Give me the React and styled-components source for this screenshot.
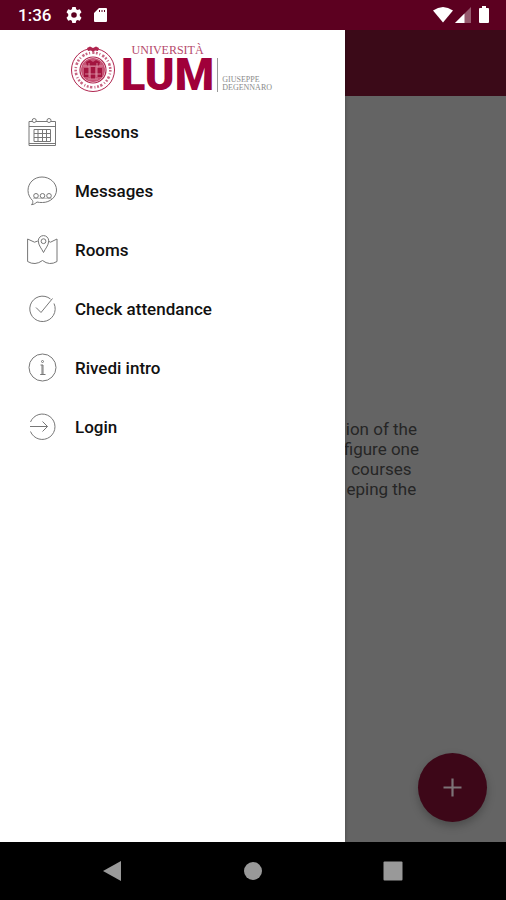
import React from 'react';
import styled, { createGlobalStyle } from 'styled-components';

const GlobalStyle = createGlobalStyle`
  * {
    box-sizing: border-box;
  }

  body {
    margin: 0;
    background: #000;
    font-family: Roboto, 'Liberation Sans', sans-serif;
  }
`;

const LessonsIcon = () => (
  <LineIcon viewBox="0 0 30 30" aria-hidden="true">
    <path d="M5.500 4.500H2V28.500H28.500V4.500H24M9 4.500H20M2 9.500H28.500M2 26.500H28.500" />
    <circle cx="7.200" cy="3.500" r="2" />
    <circle cx="22" cy="3.500" r="2" />
    <path d="M7 12.500H23.500V24.500H7ZM7 16.500H23.500M7 20.500H23.500M11 12.500V24.500M15.500 12.500V24.500M19.500 12.500V24.500" />
  </LineIcon>
);

const MessagesIcon = () => (
  <LineIcon viewBox="0 0 30 30" aria-hidden="true">
    <path d="M5.500 24.500C3 22 1 18.700 1 14.500C1 7 7 1 15 1S29.500 7 29.500 14S23 26.500 15.500 26.500C13.500 26.500 11.500 26.500 10 26C8.500 27.500 6.500 28.500 4.500 28.700C5.700 27.500 6.200 26 5.500 24.500Z" />
    <path d="M6 22.300H25" opacity="0.500" />
    <circle cx="9" cy="19.800" r="2.300" />
    <circle cx="15.500" cy="19.800" r="2.300" />
    <circle cx="22" cy="19.800" r="2.300" />
  </LineIcon>
);

const RoomsIcon = () => (
  <LineIcon viewBox="0 0 30 30" aria-hidden="true">
    <path d="M10.800 6L7.500 7.200L0.600 4V26.500Q8 31 15.500 25.500Q22.500 31 30 26.500V4L23.500 7.200L22 6.500" />
    <path d="M16.500 17.500C15 14 11.300 10.500 11.300 5.800A5.200 5.200 0 0 1 21.700 5.800C21.700 10.500 18 14 16.500 17.500Z" />
    <circle cx="16.500" cy="6.200" r="2.400" />
  </LineIcon>
);

const AttendanceIcon = () => (
  <LineIcon viewBox="0 0 30 30" aria-hidden="true">
    <path d="M27 9.500A12.700 12.700 0 1 1 23.500 5" />
    <path d="M9 13.500L14 18.500L25.500 4.500" />
  </LineIcon>
);

const InfoIcon = () => (
  <LineIcon viewBox="0 0 30 30" aria-hidden="true">
    <circle cx="15.500" cy="14.500" r="13.500" />
    <circle cx="15.500" cy="8.500" r="1" />
    <path d="M13.500 12H16V21M13.200 21.500H18.500M15 12V21" />
  </LineIcon>
);

const LoginIcon = () => (
  <LineIcon viewBox="0 0 30 30" aria-hidden="true">
    <path d="M3.500 10A12.700 12.700 0 1 1 3.500 19.500" />
    <path d="M3 14.500H20.500M15.500 9.500L20.500 14.500L15.500 19.500" />
  </LineIcon>
);

const menuItems = [
  { label: 'Lessons', icon: LessonsIcon },
  { label: 'Messages', icon: MessagesIcon },
  { label: 'Rooms', icon: RoomsIcon },
  { label: 'Check attendance', icon: AttendanceIcon },
  { label: 'Rivedi intro', icon: InfoIcon },
  { label: 'Login', icon: LoginIcon },
];

const introLines = ['ion of the', 'figure one', 'courses', 'eping the'];

const Seal = () => (
  <SealSvg viewBox="0 0 46 50" aria-hidden="true">
    <g fill="none" stroke="#b0254f">
      <circle cx="23" cy="26" r="21.500" strokeWidth="1" />
      <circle cx="23" cy="26" r="17.300" strokeWidth="2.600" strokeDasharray="1.800 1.700 1 2.200 2.400 1.400" opacity="0.700" />
      <circle cx="23" cy="26" r="13" strokeWidth="1.200" />
    </g>
    <circle cx="23" cy="26" r="12" fill="#c75476" />
    <path d="M16 18L20 16L23 18L26 16L30 18L29 22H17ZM14 24H19V33H14ZM21 23H25V35H21ZM27 24H32V33H27Z" fill="#a3143f" />
    <path d="M13 22H33M15 30H31M18 35H28M19 19V33M27 19V33" stroke="#dc97aa" strokeWidth="0.800" />
    <path d="M17 4L20 2.500L23 4L26 2.500L29 4L28 7L25 6.500L23 8L21 6.500L18 7Z" fill="#b0254f" />
  </SealSvg>
);

const App = () => {
  return (
    <Screen>
      <GlobalStyle />
      <StatusBar>
        <Time>1:36</Time>
        <StatusIcon $width={16} viewBox="0 0 16 16" aria-hidden="true">
          <path
            fillRule="evenodd"
            d="M6.300 0H9.700L10.200 2.300L11.500 3L13.800 2.300L15.500 5.200L13.800 6.900V9.100L15.500 10.800L13.800 13.700L11.500 13L10.200 13.700L9.700 16H6.300L5.800 13.700L4.500 13L2.200 13.700L0.500 10.800L2.200 9.100V6.900L0.500 5.200L2.200 2.300L4.500 3L5.800 2.300ZM8 5.200A2.800 2.800 0 1 0 8 10.800A2.800 2.800 0 1 0 8 5.200Z"
          />
        </StatusIcon>
        <StatusIcon $width={13} viewBox="0 0 13 16" aria-hidden="true">
          <path fillRule="evenodd" d="M5 1H12Q13 1 13 2V14Q13 15 12 15H1Q0 15 0 14V6ZM5 3V5H6V3ZM7.500 3V5H8.500V3ZM10 3V5H11V3Z" />
        </StatusIcon>
        <StatusRight>
          <StatusIcon $width={20} viewBox="0 0 20 16" aria-hidden="true">
            <path d="M0 3.500Q10 -3.500 20 3.500L10 15.500Z" />
          </StatusIcon>
          <StatusIcon $width={16} viewBox="0 0 16 16" aria-hidden="true">
            <path d="M16 0V16H0Z" opacity="0.350" />
            <path d="M9.500 6.500V16H0Z" />
          </StatusIcon>
          <StatusIcon $width={12} viewBox="0 0 12 18" aria-hidden="true">
            <path d="M4 0H8V2H10Q11 2 11 3V16Q11 17 10 17H2Q1 17 1 16V3Q1 2 2 2H4Z" />
          </StatusIcon>
        </StatusRight>
      </StatusBar>

      <Body>
        <Main>
          <AppBar />
          <Content>
            <Intro>
              {introLines.map((line) => (
                <span key={line}>{line}</span>
              ))}
            </Intro>
          </Content>
          <AddButton type="button" aria-label="Add">
            <svg width="19" height="19" viewBox="0 0 19 19" aria-hidden="true">
              <path d="M9.500 0.500V18.500M0.500 9.500H18.500" stroke="#7d7377" strokeWidth="2.200" />
            </svg>
          </AddButton>
        </Main>

        <Drawer>
          <Logo>
            <Seal />
            <Brand>
              <University>UNIVERSITÀ</University>
              <Acronym>LUM</Acronym>
            </Brand>
            <Founder>
              <span>GIUSEPPE</span>
              <span>DEGENNARO</span>
            </Founder>
          </Logo>
          <nav>
            <Menu>
              {menuItems.map(({ label, icon: Icon }) => (
                <li key={label}>
                  <MenuLink href="#">
                    <Icon />
                    {label}
                  </MenuLink>
                </li>
              ))}
            </Menu>
          </nav>
        </Drawer>
      </Body>

      <NavBar>
        <NavButton type="button" aria-label="Back">
          <svg width="20" height="20" viewBox="0 0 20 20"><path d="M18 0V20L0 10Z" /></svg>
        </NavButton>
        <NavButton type="button" aria-label="Home">
          <svg width="20" height="20" viewBox="0 0 20 20"><circle cx="10" cy="10" r="9" /></svg>
        </NavButton>
        <NavButton type="button" aria-label="Overview">
          <svg width="20" height="20" viewBox="0 0 20 20"><rect x="0.500" y="0.500" width="19" height="19" rx="1" /></svg>
        </NavButton>
      </NavBar>
    </Screen>
  );
};

const Screen = styled.div`
  display: flex;
  flex-direction: column;
  min-height: 100vh;
`;

const StatusBar = styled.header`
  display: flex;
  align-items: center;
  height: 30px;
  padding: 0 16px 0 18px;
  background: #5c0020;
  color: #fff;
`;

const Time = styled.span`
  margin-right: 15px;
  font-size: 17px;
  font-weight: 500;
  line-height: 20px;
`;

const StatusIcon = styled.svg`
  flex: none;
  width: ${({ $width }) => $width}px;
  height: 16px;
  margin-right: 12px;
  fill: #fff;
`;

const StatusRight = styled.div`
  display: flex;
  align-items: center;
  gap: 2px;
  margin-left: auto;

  ${StatusIcon} {
    margin-right: 0;
  }

  ${StatusIcon}:last-child {
    height: 18px;
    margin-left: 5px;
  }
`;

const Body = styled.div`
  position: relative;
  display: flex;
  flex: 1;
`;

const Main = styled.main`
  position: relative;
  display: flex;
  flex: 1;
  flex-direction: column;
  background: #646464;
`;

const AppBar = styled.div`
  height: 66px;
  background: #3b0a18;
`;

const Content = styled.div`
  display: flex;
  flex: 1;
  align-items: center;
  justify-content: flex-end;
  padding: 0 87px 20px 0;
`;

const Intro = styled.p`
  display: flex;
  flex-direction: column;
  align-items: center;
  margin: 0;
  color: #262626;
  font-size: 17px;
  line-height: 20px;
`;

const AddButton = styled.button`
  position: absolute;
  right: 19px;
  bottom: 20px;
  display: flex;
  align-items: center;
  justify-content: center;
  width: 69px;
  height: 69px;
  padding: 0;
  border: none;
  border-radius: 50%;
  background: #3d0718;
  box-shadow: 0 4px 8px rgba(0, 0, 0, 0.25);
  cursor: pointer;
`;

const Drawer = styled.aside`
  position: absolute;
  top: 0;
  bottom: 0;
  left: 0;
  width: 345px;
  background: #fff;
  box-shadow: 0 0 4px rgba(0, 0, 0, 0.3);
  clip-path: inset(0 -8px 0 0);
`;

const Logo = styled.div`
  display: flex;
  align-items: flex-end;
  height: 72px;
  padding: 0 0 8px 70px;
`;

const SealSvg = styled.svg`
  width: 46px;
  height: 50px;
  margin-right: 5px;
`;

const Brand = styled.div`
  display: flex;
  flex-direction: column;
  align-items: center;
  padding-right: 3px;
`;

const University = styled.span`
  color: #b5486a;
  font-family: 'Liberation Serif', serif;
  font-size: 12px;
  line-height: 12px;
`;

const Acronym = styled.strong`
  color: #a0003a;
  font-size: 45px;
  font-weight: 900;
  line-height: 38px;
`;

const Founder = styled.div`
  display: flex;
  flex-direction: column;
  justify-content: flex-end;
  height: 34px;
  margin-bottom: 2px;
  padding-left: 4px;
  border-left: 1px solid #999;
  color: #8a8a8a;
  font-family: 'Liberation Serif', serif;
  font-size: 8px;
  line-height: 8px;
`;

const Menu = styled.ul`
  margin: 0;
  padding: 0;
  list-style: none;
`;

const MenuLink = styled.a`
  display: flex;
  align-items: center;
  gap: 18px;
  height: 59px;
  padding: 0 27px;
  color: #111;
  font-size: 17px;
  font-weight: 500;
  line-height: 20px;
  text-decoration: none;
`;

const LineIcon = styled.svg`
  flex: none;
  width: 30px;
  height: 30px;
  overflow: visible;
  fill: none;
  stroke: #777;
  stroke-width: 1;
`;

const NavBar = styled.footer`
  display: flex;
  align-items: center;
  justify-content: center;
  gap: 92px;
  height: 58px;
  background: #000;
`;

const NavButton = styled.button`
  display: flex;
  align-items: center;
  justify-content: center;
  width: 48px;
  height: 48px;
  padding: 0;
  border: none;
  background: transparent;
  cursor: pointer;

  svg {
    fill: #999;
  }
`;

export default App;
